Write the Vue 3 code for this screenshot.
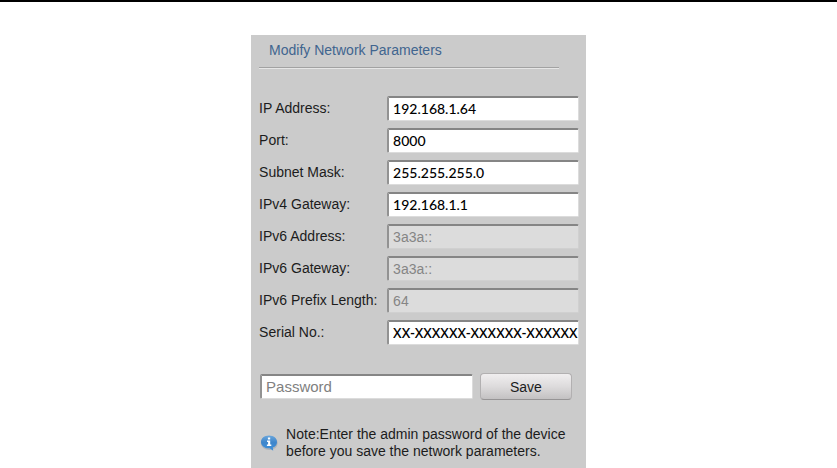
<script setup>
import { reactive, ref } from 'vue'

const fields = reactive([
  { id: 'ip', label: 'IP Address:', value: '192.168.1.64' },
  { id: 'port', label: 'Port:', value: '8000' },
  { id: 'mask', label: 'Subnet Mask:', value: '255.255.255.0' },
  { id: 'gateway4', label: 'IPv4 Gateway:', value: '192.168.1.1' },
  { id: 'ip6', label: 'IPv6 Address:', value: '3a3a::', disabled: true },
  { id: 'gateway6', label: 'IPv6 Gateway:', value: '3a3a::', disabled: true },
  { id: 'prefix6', label: 'IPv6 Prefix Length:', value: '64', disabled: true },
  { id: 'serial', label: 'Serial No.:', value: 'XX-XXXXXX-XXXXXX-XXXXXX', serial: true },
])
const password = ref('')
</script>

<template>
  <main class="page">
    <form class="panel" @submit.prevent>
      <h1 class="title">Modify Network Parameters</h1>
      <div class="fields">
        <div v-for="f in fields" :key="f.id" class="row">
          <label :for="f.id">{{ f.label }}</label>
          <input
            :id="f.id"
            v-model="f.value"
            class="box"
            :class="{ serial: f.serial }"
            type="text"
            :disabled="f.disabled"
          />
        </div>
      </div>
      <div class="actions">
        <input v-model="password" class="box" type="password" placeholder="Password" aria-label="Password" />
        <button type="submit">Save</button>
      </div>
      <div class="note">
        <svg class="icon" viewBox="0 0 18 18" aria-hidden="true">
          <defs>
            <linearGradient id="bubble" x1="0" y1="0" x2="0" y2="1">
              <stop offset="0" stop-color="#6aa6dc" />
              <stop offset="0.45" stop-color="#3f86cb" />
              <stop offset="1" stop-color="#3c90dc" />
            </linearGradient>
          </defs>
          <ellipse cx="9.3" cy="9" rx="8.4" ry="6.9" fill="#8f9aa5" opacity="0.5" />
          <path
            d="M9 1.5c4.6 0 8 2.8 8 6.4 0 2.7-1.7 4.7-4.2 5.7l.4 3.1-3.5-2.4H9c-4.6 0-8-2.8-8-6.4s3.4-6.4 8-6.4z"
            fill="url(#bubble)"
          />
          <path d="M7.9 3.5h2.3v1.9H7.9zM7 6.6h3.2v4h1.1v1.5H6.9v-1.5h1.2V8H7z" fill="#fff" />
        </svg>
        <p>Note:Enter the admin password of the device before you save the network parameters.</p>
      </div>
    </form>
  </main>
</template>

<style>
body {
  margin: 0;
  background: #fff;
}
</style>

<style scoped>
.page {
  box-sizing: border-box;
  min-height: 100vh;
  display: flex;
  flex-direction: column;
  align-items: center;
  border-top: 2px solid #000;
  padding-top: 33px;
  font-family: "Liberation Sans", Arial, sans-serif;
  font-size: 14px;
  color: #1c1c1c;
}
.panel {
  box-sizing: border-box;
  flex: 1;
  width: 40%;
  min-width: 334px;
  padding: 0 7px 0 8px;
  background: #cbcbcb;
}
.title {
  margin: 0 20px 28px 0;
  padding: 6px 10px 7px;
  border-bottom: 1px solid #a2a2a2;
  box-shadow: 0 1px 0 #e6e6e6;
  font-size: 14px;
  font-weight: 400;
  line-height: 19px;
  color: #41658f;
}
.fields {
  display: grid;
  gap: 7px;
}
.row {
  display: grid;
  grid-template-columns: 128px 1fr;
  line-height: 25px;
}
.box {
  box-sizing: border-box;
  min-width: 0;
  width: 100%;
  height: 25px;
  margin: 0;
  padding: 0 4px 1px;
  border: 1px solid #dcdcdc;
  border-top: 2px solid #858585;
  border-left: 2px solid #929292;
  border-radius: 2px;
  background: #fff;
  font-family: Lato, "Liberation Sans", sans-serif;
  font-size: 14px;
  font-weight: 500;
  color: #000;
}
.box:disabled {
  background: #dcdcdc;
  border-right-color: #d0d0d0;
  border-bottom-color: #d0d0d0;
  font-family: "Liberation Sans", Arial, sans-serif;
  font-weight: 400;
  color: #858585;
}
.serial {
  padding-right: 0;
  font-family: "Noto Sans", "Liberation Sans", sans-serif;
}
.actions {
  display: grid;
  grid-template-columns: 1fr 92px;
  gap: 7px;
  align-items: center;
  margin: 28px 7px 26px 1px;
}
.actions .box {
  font-family: "Liberation Sans", Arial, sans-serif;
  font-size: 15px;
  font-weight: 400;
}
.box::placeholder {
  color: #808080;
  opacity: 1;
}
button {
  height: 27px;
  padding: 0;
  border: 1px solid #b2b0b1;
  border-bottom-color: #969495;
  border-radius: 4px;
  background: linear-gradient(#f0eeef, #dddbdc 50%, #c3c1c2);
  font: inherit;
  color: #1c1c1c;
}
.note {
  display: flex;
  align-items: center;
  gap: 8px;
  padding-left: 1px;
}
.icon {
  flex: none;
  width: 18px;
  height: 18px;
}
.note p {
  margin: 0;
  line-height: 17px;
}
</style>
